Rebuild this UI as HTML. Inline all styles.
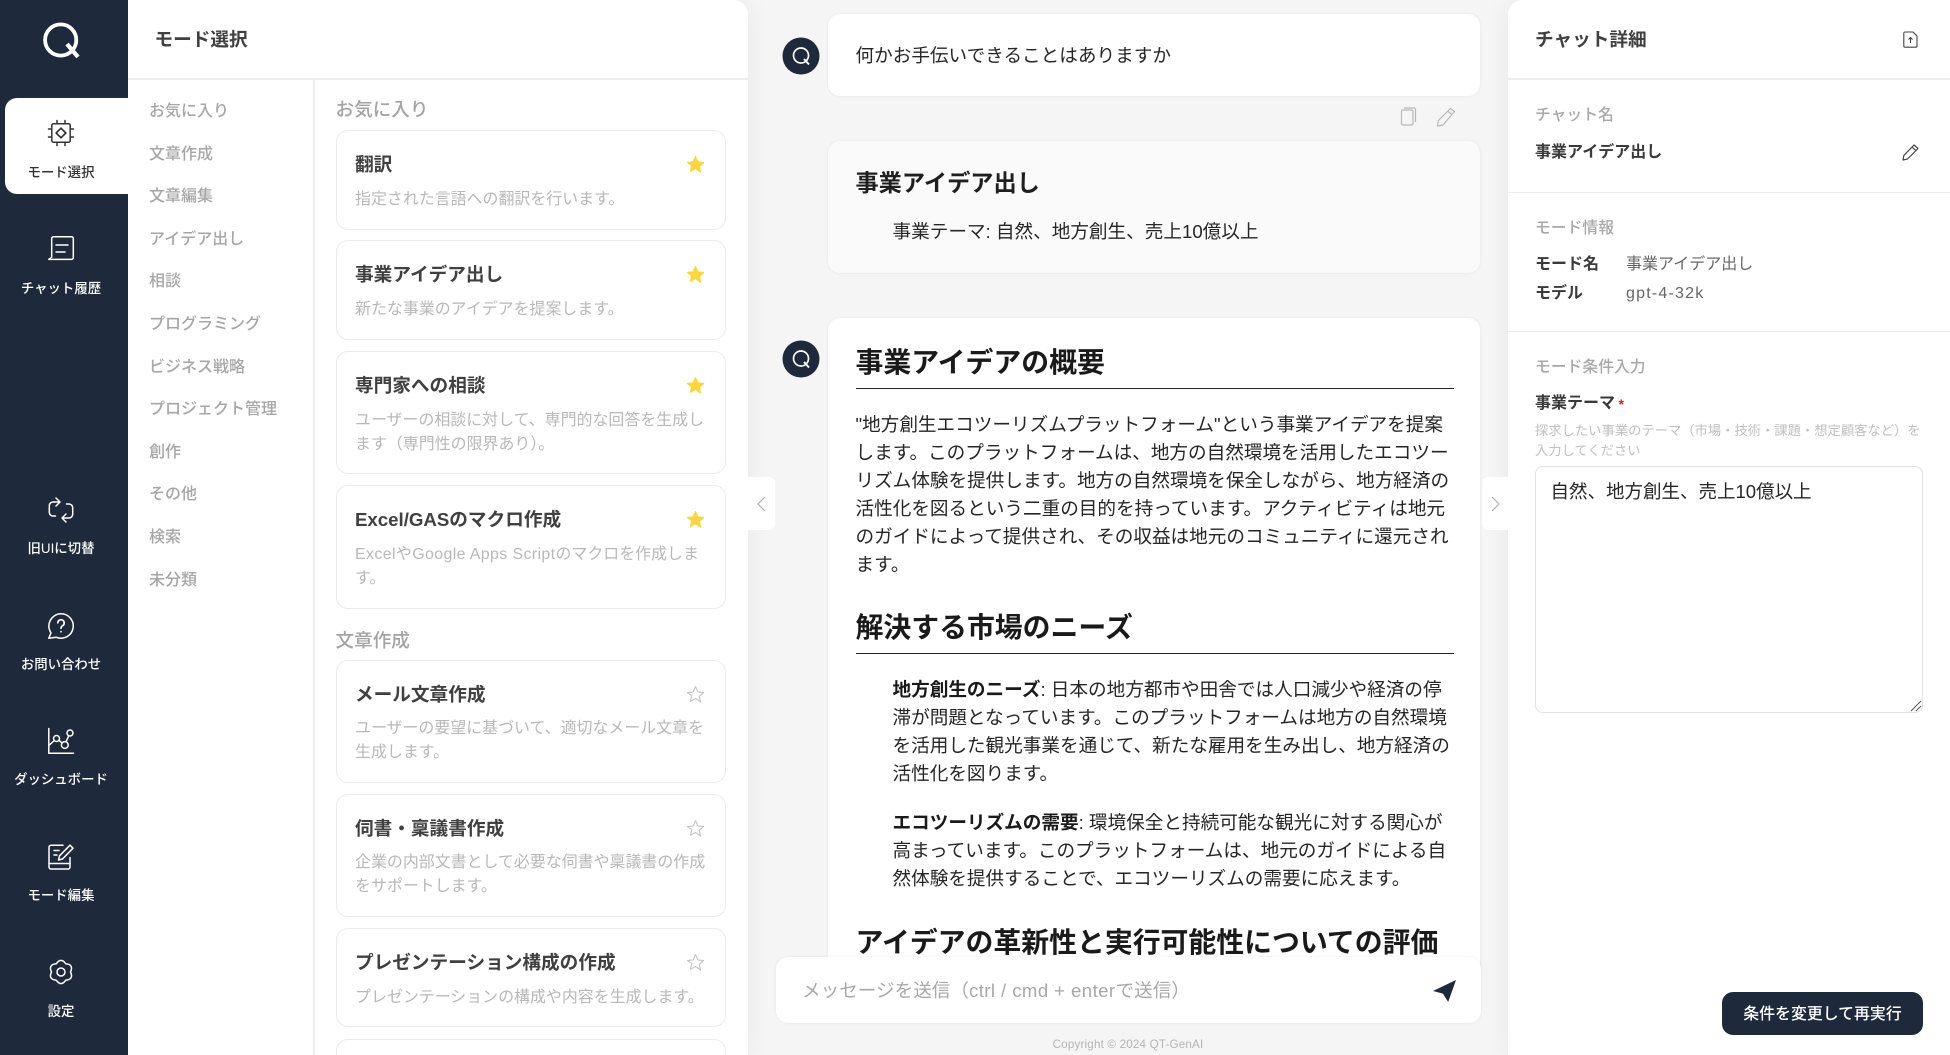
<!DOCTYPE html>
<html lang="ja"><head><meta charset="utf-8"><title>モード選択</title>
<style>
*{box-sizing:border-box}
html,body{margin:0;padding:0;width:1950px;height:1055px;overflow:hidden;background:#f5f5f5;font-family:"Liberation Sans","Noto Sans CJK JP",sans-serif;color:#262626}
#root{position:relative;width:1950px;height:1055px;overflow:hidden}
.t{position:absolute;white-space:nowrap;line-height:28px;height:28px;margin-top:1px}
svg{position:absolute;display:block;overflow:visible}
#side{position:absolute;left:0;top:0;width:128px;height:1055px;background:#1e293b}
#active{position:absolute;left:5px;top:98px;width:125px;height:96px;background:#fff;border-radius:12px 0 0 12px}
.lb{left:0;width:122px;text-align:center;font-size:13.4px;font-weight:500;color:#fff}
.ic{left:48px;width:26px;height:26px;fill:none;stroke:#fff;stroke-width:1.5;stroke-linecap:round;stroke-linejoin:round}
#lp{position:absolute;left:128px;top:0;width:620px;height:1055px;background:#fff;border-radius:0 14px 0 0;box-shadow:0 0 26px rgba(0,0,0,.06);overflow:hidden}
#rp{position:absolute;left:1508px;top:0;width:442px;height:1055px;background:#fff;border-radius:14px 0 0 0;box-shadow:0 0 26px rgba(0,0,0,.06)}
.hl{position:absolute;height:1.5px;background:#ececec}
.cat{left:149px;font-size:16px;font-weight:500;color:#a6a6a6}
.sec{left:335.5px;font-size:18.6px;font-weight:500;color:#a3a3a3}
.card{position:absolute;left:335.5px;width:390.5px;background:#fff;border:1.5px solid #ececec;border-radius:12px}
.ti{left:355px;font-size:18.65px;font-weight:700;color:#404040;margin-top:.5px}
.de{left:355px;font-size:15.95px;color:#b8b8b8}
.st{left:686px;width:19px;height:19px;margin-top:-1px}
.bub{position:absolute;left:828px;width:652px;background:#fff;border-radius:12px;box-shadow:0 0 3px rgba(0,0,0,.08)}
.b{font-size:18.62px;color:#262626}
.h1{left:855.5px;font-size:27.87px;font-weight:700;color:#1a1a1a}
.rule{position:absolute;left:855.5px;width:598.5px;height:1.3px;background:#222}
.rs{left:1535px;font-size:15.8px;font-weight:500;color:#a8a8a8}
.rb{left:1535px;font-size:16px;font-weight:700;color:#3a3a3a}
.rv{left:1626px;font-size:16px;color:#666}
.tog{position:absolute;top:477px;width:26.5px;height:53px;background:#fff}
</style></head><body><div id="root">

<div id="lp"></div>
<div class="hl" style="left:128px;top:78px;width:620px"></div>
<div style="position:absolute;left:313px;top:80px;width:1.5px;height:975px;background:#ececec"></div>
<div class="t" style="left:154.5px;top:25px;font-size:18.65px;font-weight:700;color:#404040">モード選択</div>

<div id="side"></div>
<div id="active"></div>
<svg style="left:42px;top:22px" width="38" height="36" viewBox="0 0 38 36" fill="none" stroke="#fff"><circle cx="18.7" cy="18" r="15.6" stroke-width="3.8"/><path d="M25 22 L36 35" stroke-width="4.2"/></svg>
<svg class="ic" style="top:120px;stroke:#333" viewBox="0 0 26 26"><rect x="3.8" y="3.8" width="18.4" height="18.4" rx="1.5"/><path d="M9 .5v3.3M17 .5v3.3M9 22.2v3.3M17 22.2v3.3M.5 9h3.3M.5 17h3.3M22.2 9h3.3M22.2 17h3.3"/><path d="M13 8.2L17.8 13 13 17.8 8.2 13z" stroke-width="1.7"/></svg>
<div class="t lb" style="top:158px;color:#333">モード選択</div>
<svg class="ic" style="top:236px" viewBox="0 0 26 26"><path d="M5.5 .8h18a1.8 1.8 0 0 1 1.8 1.8v19a1.8 1.8 0 0 1-1.8 1.8H.8l2.9-2.2V2.6A1.8 1.8 0 0 1 5.5 .8z"/><path d="M8 9h12M8 16h9"/></svg>
<div class="t lb" style="top:274px">チャット履歴</div>
<svg class="ic" style="top:497px" viewBox="0 0 26 26"><path d="M11.5 5H5A3.7 3.7 0 0 0 1.3 8.7v6.6A3.7 3.7 0 0 0 5 19h2.5M8 1l4 4-4 4"/><path d="M14.5 21H21a3.7 3.7 0 0 0 3.7-3.7v-6.6A3.7 3.7 0 0 0 21 7h-2.5M18 25l-4-4 4-4"/></svg>
<div class="t lb" style="top:534px">旧UIに切替</div>
<svg class="ic" style="top:612.5px" viewBox="0 0 26 26"><path d="M13 .8a12.2 12.2 0 1 1-4.8 23.4L.8 25.2l2.2-5.3A12.2 12.2 0 0 1 13 .8z"/><path d="M9.8 9.8a3.2 3.2 0 1 1 4.8 2.9c-1 .6-1.6 1.3-1.6 2.6M13 18.6v.2" stroke-width="1.7"/></svg>
<div class="t lb" style="top:649.5px">お問い合わせ</div>
<svg class="ic" style="top:728px" viewBox="0 0 26 26"><path d="M.8 .5V25.3H25.5"/><circle cx="8.5" cy="10.5" r="3"/><circle cx="16.8" cy="17" r="3.4"/><circle cx="22" cy="5" r="3"/><path d="M10.9 12.3l3.2 2.6M18 13.8L20.8 7.8M6.3 12.5L.8 17.5"/></svg>
<div class="t lb" style="top:765px">ダッシュボード</div>
<svg class="ic" style="top:844px" viewBox="0 0 26 26"><path d="M15 1.2H3A2 2 0 0 0 1 3.2V23a2 2 0 0 0 2 2h17a2 2 0 0 0 2-2V13.5"/><path d="M1 19.5h21M6 6.5h5M6 11h3"/><path d="M22 1.2l3 3L14.5 15l-4 1 1-4.2z"/></svg>
<div class="t lb" style="top:881px">モード編集</div>
<svg class="ic" style="top:959px" viewBox="0 0 26 26"><path d="M8.25 4.8Q13-2 17.75 4.8Q26 5.5 22.5 13Q26 20.5 17.75 21.2Q13 28 8.25 21.2Q0 20.5 3.5 13Q0 5.5 8.25 4.8z"/><circle cx="13" cy="13" r="4"/></svg>
<div class="t lb" style="top:997px">設定</div>

<div class="t cat" style="top:97px">お気に入り</div>
<div class="t cat" style="top:139.6px">文章作成</div>
<div class="t cat" style="top:182.2px">文章編集</div>
<div class="t cat" style="top:224.8px">アイデア出し</div>
<div class="t cat" style="top:267.4px">相談</div>
<div class="t cat" style="top:310px">プログラミング</div>
<div class="t cat" style="top:352.6px">ビジネス戦略</div>
<div class="t cat" style="top:395.2px">プロジェクト管理</div>
<div class="t cat" style="top:437.8px">創作</div>
<div class="t cat" style="top:480.4px">その他</div>
<div class="t cat" style="top:523px">検索</div>
<div class="t cat" style="top:565.6px">未分類</div>

<div class="t sec" style="top:95px">お気に入り</div>
<div class="card" style="top:130.2px;height:99.8px"></div>
<div class="t ti" style="top:150.5px">翻訳</div>
<svg class="st" style="top:155.5px" viewBox="0 0 24 24"><path fill="#fcd53f" stroke="#fcd53f" stroke-width="1.5" stroke-linejoin="round" d="M12 2l3 6.8 7.3.7-5.5 4.9 1.6 7.2L12 17l-6.4 3.6 1.6-7.2L1.7 9.500 9 8.800z"/></svg>
<div class="t de" style="top:184.5px">指定された言語への翻訳を行います。</div>
<div class="card" style="top:240.2px;height:99.8px"></div>
<div class="t ti" style="top:260.5px">事業アイデア出し</div>
<svg class="st" style="top:265.5px" viewBox="0 0 24 24"><path fill="#fcd53f" stroke="#fcd53f" stroke-width="1.5" stroke-linejoin="round" d="M12 2l3 6.8 7.3.7-5.5 4.9 1.6 7.2L12 17l-6.4 3.6 1.6-7.2L1.7 9.500 9 8.800z"/></svg>
<div class="t de" style="top:294.5px">新たな事業のアイデアを提案します。</div>
<div class="card" style="top:350.7px;height:123.8px"></div>
<div class="t ti" style="top:371px">専門家への相談</div>
<svg class="st" style="top:376.5px" viewBox="0 0 24 24"><path fill="#fcd53f" stroke="#fcd53f" stroke-width="1.5" stroke-linejoin="round" d="M12 2l3 6.8 7.3.7-5.5 4.9 1.6 7.2L12 17l-6.4 3.6 1.6-7.2L1.7 9.500 9 8.800z"/></svg>
<div class="t de" style="top:405.7px">ユーザーの相談に対して、専門的な回答を生成し</div>
<div class="t de" style="top:429.8px">ます（専門性の限界あり）。</div>
<div class="card" style="top:485.2px;height:123.8px"></div>
<div class="t ti" style="top:505.5px">Excel/GASのマクロ作成</div>
<svg class="st" style="top:510.5px" viewBox="0 0 24 24"><path fill="#fcd53f" stroke="#fcd53f" stroke-width="1.5" stroke-linejoin="round" d="M12 2l3 6.8 7.3.7-5.5 4.9 1.6 7.2L12 17l-6.4 3.6 1.6-7.2L1.7 9.500 9 8.800z"/></svg>
<div class="t de" style="top:540.2px"><span style="letter-spacing:.38px">ExcelやGoogle Apps Script</span>のマクロを作成しま</div>
<div class="t de" style="top:564.3px">す。</div>

<div class="t sec" style="top:625.5px">文章作成</div>
<div class="card" style="top:659.7px;height:123.3px"></div>
<div class="t ti" style="top:680px">メール文章作成</div>
<svg class="st" style="top:686px" viewBox="0 0 24 24"><path fill="none" stroke="#c4c4c4" stroke-width="1.4" stroke-linejoin="round" d="M12 2l3 6.8 7.3.7-5.5 4.9 1.6 7.2L12 17l-6.4 3.6 1.6-7.2L1.7 9.500 9 8.800z"/></svg>
<div class="t de" style="top:714.2px">ユーザーの要望に基づいて、適切なメール文章を</div>
<div class="t de" style="top:738.3px">生成します。</div>
<div class="card" style="top:793.7px;height:123.8px"></div>
<div class="t ti" style="top:814px">伺書・稟議書作成</div>
<svg class="st" style="top:820px" viewBox="0 0 24 24"><path fill="none" stroke="#c4c4c4" stroke-width="1.4" stroke-linejoin="round" d="M12 2l3 6.8 7.3.7-5.5 4.9 1.6 7.2L12 17l-6.4 3.6 1.6-7.2L1.7 9.500 9 8.800z"/></svg>
<div class="t de" style="top:848px">企業の内部文書として必要な伺書や稟議書の作成</div>
<div class="t de" style="top:872.3px">をサポートします。</div>
<div class="card" style="top:928.2px;height:99.3px"></div>
<div class="t ti" style="top:948px">プレゼンテーション構成の作成</div>
<svg class="st" style="top:954px" viewBox="0 0 24 24"><path fill="none" stroke="#c4c4c4" stroke-width="1.4" stroke-linejoin="round" d="M12 2l3 6.8 7.3.7-5.5 4.9 1.6 7.2L12 17l-6.4 3.6 1.6-7.2L1.7 9.500 9 8.800z"/></svg>
<div class="t de" style="top:982.7px">プレゼンテーションの構成や内容を生成します。</div>
<div class="card" style="top:1038.7px;height:30px"></div>

<div class="tog" style="left:748px;border-radius:0 6px 6px 0"></div>
<svg style="left:757px;top:496px" width="9" height="16" viewBox="0 0 9 16" fill="none" stroke="#b0b0b0" stroke-width="1.2"><path d="M8 1L1 8l7 7"/></svg>
<div id="rp"></div>
<div class="tog" style="left:1481.5px;border-radius:6px 0 0 6px"></div>
<svg style="left:1491px;top:496px" width="9" height="16" viewBox="0 0 9 16" fill="none" stroke="#b0b0b0" stroke-width="1.2"><path d="M1 1l7 7-7 7"/></svg>

<svg style="left:777px;top:37px" width="48" height="38" viewBox="0 0 48 38"><circle cx="24" cy="19" r="18.5" fill="#1e293b"/><circle cx="24" cy="18.5" r="7.5" fill="none" stroke="#fff" stroke-width="1.7"/><path d="M27 22l5 5.5" stroke="#fff" stroke-width="1.9" fill="none"/></svg>
<svg style="left:777px;top:340px" width="48" height="38" viewBox="0 0 48 38"><circle cx="24" cy="19" r="18.5" fill="#1e293b"/><circle cx="24" cy="18.5" r="7.5" fill="none" stroke="#fff" stroke-width="1.7"/><path d="M27 22l5 5.5" stroke="#fff" stroke-width="1.9" fill="none"/></svg>

<div class="bub" style="top:14px;height:82px"></div>
<div class="t b" style="left:855.5px;top:41px">何かお手伝いできることはありますか</div>
<svg style="left:1400px;top:107px" width="17" height="19" viewBox="0 0 17 19" fill="none" stroke="#b8b8b8" stroke-width="1.2"><rect x="1.5" y="3" width="11.5" height="15" rx="1.5"/><path d="M4 1h10a1.5 1.5 0 0 1 1.5 1.5V15"/></svg>
<svg style="left:1436px;top:107px" width="20" height="20" viewBox="0 0 20 20" fill="none" stroke="#b8b8b8" stroke-width="1.2" stroke-linejoin="round"><path d="M14.5 1.5l4 3L7 18l-5.5 1 .8-5.5zM12 4.5l4 3"/></svg>

<div class="bub" style="top:141px;height:132px;background:#fafafa"></div>
<div class="t" style="left:855.5px;top:167.5px;font-size:23.2px;font-weight:700;color:#1f1f1f">事業アイデア出し</div>
<div class="t b" style="left:892.5px;top:217px">事業テーマ: 自然、地方創生、売上10億以上</div>

<div style="position:absolute;left:0;top:0;width:1950px;height:975px;overflow:hidden">
<div class="bub" style="top:318px;height:720px"></div>
<div class="t h1" style="top:348px">事業アイデアの概要</div>
<div class="rule" style="top:387.5px"></div>
<div class="t b" style="left:855.5px;top:410px">"地方創生エコツーリズムプラットフォーム"という事業アイデアを提案</div>
<div class="t b" style="left:855.5px;top:438px">します。このプラットフォームは、地方の自然環境を活用したエコツー</div>
<div class="t b" style="left:855.5px;top:466px">リズム体験を提供します。地方の自然環境を保全しながら、地方経済の</div>
<div class="t b" style="left:855.5px;top:494px">活性化を図るという二重の目的を持っています。アクティビティは地元</div>
<div class="t b" style="left:855.5px;top:522px">のガイドによって提供され、その収益は地元のコミュニティに還元され</div>
<div class="t b" style="left:855.5px;top:550px">ます。</div>
<div class="t h1" style="top:613px">解決する市場のニーズ</div>
<div class="rule" style="top:652.5px"></div>
<div class="t b" style="left:892.5px;top:675px"><b style="color:#1a1a1a">地方創生のニーズ</b>: 日本の地方都市や田舎では人口減少や経済の停</div>
<div class="t b" style="left:892.5px;top:703px">滞が問題となっています。このプラットフォームは地方の自然環境</div>
<div class="t b" style="left:892.5px;top:731px">を活用した観光事業を通じて、新たな雇用を生み出し、地方経済の</div>
<div class="t b" style="left:892.5px;top:759px">活性化を図ります。</div>
<div class="t b" style="left:892.5px;top:808px"><b style="color:#1a1a1a">エコツーリズムの需要</b>: 環境保全と持続可能な観光に対する関心が</div>
<div class="t b" style="left:892.5px;top:836px">高まっています。このプラットフォームは、地元のガイドによる自</div>
<div class="t b" style="left:892.5px;top:864px">然体験を提供することで、エコツーリズムの需要に応えます。</div>
<div class="t h1" style="top:927.5px">アイデアの革新性と実行可能性についての評価</div>
</div>

<div style="position:absolute;left:776px;top:957px;width:705px;height:66px;background:#fff;border-radius:12px;box-shadow:0 0 3px rgba(0,0,0,.08)"></div>
<div class="t" style="left:802px;top:976px;font-size:18.6px;color:#a8a8a8">メッセージを送信（<span style="letter-spacing:.42px">ctrl / cmd + enter</span>で送信）</div>
<svg style="left:1433px;top:979.5px" width="23" height="22" viewBox="0 0 22 21"><path fill="#1e293b" d="M22 0L0 10.5l9.5 2.5L14.500 21z"/></svg>
<div class="t" style="left:1000px;width:256px;text-align:center;top:1029.5px;font-size:11.6px;letter-spacing:.2px;color:#b4b4b4">Copyright © 2024 QT-GenAI</div>

<div class="hl" style="left:1508px;top:78px;width:442px"></div>
<div class="hl" style="left:1508px;top:191.5px;width:442px"></div>
<div class="hl" style="left:1508px;top:330.5px;width:442px"></div>
<div class="t" style="left:1535px;top:25px;font-size:18.65px;font-weight:700;color:#404040">チャット詳細</div>
<svg style="left:1903px;top:31px" width="15" height="17" viewBox="0 0 15 17" fill="none" stroke="#444" stroke-width="1.1" stroke-linejoin="round"><path d="M2 1h8l4 4v10a1.200 1.200 0 0 1-1.200 1.200H2A1.200 1.200 0 0 1 .8 15V2.200A1.200 1.200 0 0 1 2 1zM7.500 12V6.500M5.500 8.500l2-2 2 2"/></svg>
<div class="t rs" style="top:100.5px">チャット名</div>
<div class="t rb" style="top:138px">事業アイデア出し</div>
<svg style="left:1902px;top:143.5px" width="17" height="17" viewBox="0 0 17 17" fill="none" stroke="#444" stroke-width="1.2" stroke-linejoin="round"><path d="M12 1l4 3.500L5.500 15 1 16l.8-4.500zM10 3.200l4 3.500"/></svg>
<div class="t rs" style="top:213.5px">モード情報</div>
<div class="t rb" style="top:249.5px">モード名</div>
<div class="t rv" style="top:249.5px">事業アイデア出し</div>
<div class="t rb" style="top:278.5px">モデル</div>
<div class="t rv" style="top:278.5px;letter-spacing:1.2px">gpt-4-32k</div>
<div class="t rs" style="top:353px">モード条件入力</div>
<div class="t rb" style="top:388.5px">事業テーマ</div>
<div class="t" style="left:1618.5px;top:388.5px;font-size:14px;font-weight:700;color:#c8242b">*</div>
<div class="t" style="left:1535px;top:416px;font-size:13.3px;color:#c0c0c0">探求したい事業のテーマ（市場・技術・課題・想定顧客など）を</div>
<div class="t" style="left:1535px;top:436px;font-size:13.3px;color:#c0c0c0">入力してください</div>
<div style="position:absolute;left:1535px;top:466px;width:388px;height:246.5px;border:1.5px solid #e2e2e2;border-radius:8px;background:#fff"></div>
<div class="t" style="left:1550.5px;top:477px;font-size:18.5px;color:#262626">自然、地方創生、売上10億以上</div>
<svg style="left:1910px;top:700px" width="12" height="12" viewBox="0 0 12 12" fill="none" stroke="#555" stroke-width="1"><path d="M1 11L11 1M6 11l5-5"/></svg>
<div style="position:absolute;left:1722px;top:992px;width:201px;height:43px;background:#1e293b;border-radius:11px"></div>
<div class="t" style="left:1722px;width:201px;text-align:center;top:1000px;font-size:15.9px;font-weight:500;color:#fff">条件を変更して再実行</div>
</div></body></html>
